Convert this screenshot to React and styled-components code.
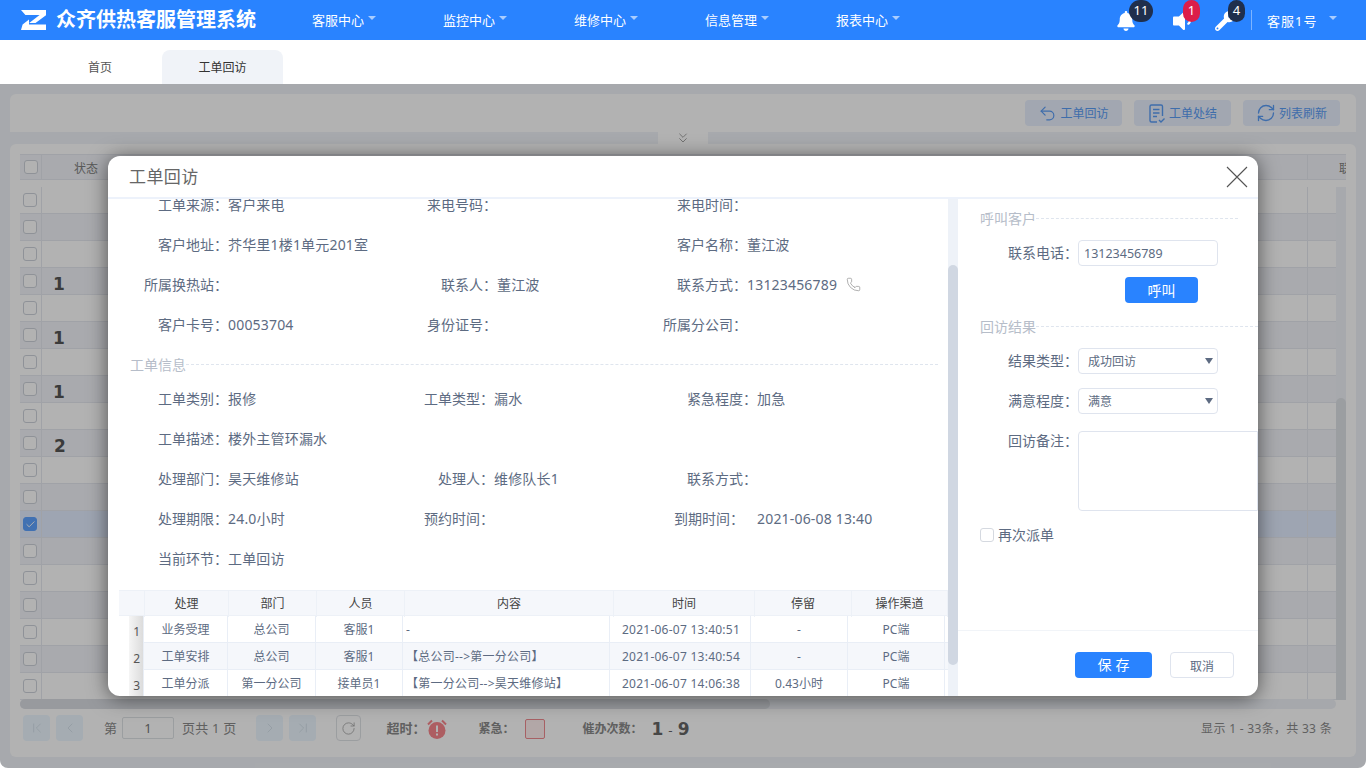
import React from 'react';
import styled, { createGlobalStyle } from 'styled-components';
import { Undo2, RefreshCw, RotateCw, ChevronsDown, ChevronFirst, ChevronLast, ChevronLeft, ChevronRight, Phone, Check } from 'lucide-react';
import { FaBell, FaVolumeDown, FaWrench } from 'react-icons/fa';

const Global = createGlobalStyle`
  html, body { margin: 0; padding: 0; background: #fff; }
  body { width: 1366px; height: 768px; overflow: hidden; font-family: "Noto Sans", "Noto Sans CJK SC", sans-serif; }
  * { box-sizing: border-box; }
`;

const Page = styled.div`width: 1366px; height: 768px; display: flex; flex-direction: column; overflow: hidden;`;
const Header = styled.header`height: 40px; background: #2983ff; display: flex; align-items: center; color: #fff; flex: none;`;
const Logo = styled.svg`width: 25px; height: 20px; margin-left: 21px; flex: none;`;
const Brand = styled.div`width: 256px; margin-left: 10px; font-size: 20px; font-weight: 700; line-height: 40px; white-space: nowrap;`;
const Nav = styled.nav`display: flex; flex: 1;`;
const NavItem = styled.div`width: 131px; font-size: 13px; line-height: 40px; display: flex; align-items: center;`;
const Caret = styled.i`
  display: block; width: 0; height: 0; margin: -5px 0 0 4px;
  border-left: 4.5px solid transparent; border-right: 4.5px solid transparent; border-top: 4.5px solid #a9cdff;
`;
const Alerts = styled.div`display: flex; align-items: center; height: 40px; margin-right: 29px;`;
const AlertIcon = styled.div`position: relative; width: ${p => p.$w}px; height: 40px; display: flex; align-items: center; padding-top: 2px; font-size: ${p => p.$size}px;`;
const Badge = styled.span`
  position: absolute; top: 0; left: ${p => p.$left}px; width: ${p => p.$w}px; height: 22px; border-radius: 11px;
  background: ${p => p.$bg}; color: #fff; font-size: 13px; line-height: 21px; text-align: center;
`;
const VDivider = styled.span`width: 1px; height: 20px; background: #ffffff66; margin-right: 15px;`;
const User = styled.div`font-size: 13px; letter-spacing: 1px; width: 58px; white-space: nowrap;`;

const Tabs = styled.div`height: 44px; background: #fff; padding: 10px 0 0 40px; display: flex; gap: 2px; flex: none;`;
const Tab = styled.div`
  width: ${p => p.$active ? 121 : 120}px; height: 34px; line-height: 35px; font-size: 12px; text-align: center; border-radius: 8px 8px 0 0;
  background: ${p => p.$active ? '#f0f3f8' : '#fff'}; color: ${p => p.$active ? '#333' : '#555'};
`;

const Main = styled.main`
  position: relative; flex: 1; height: 684px; background: #f0f3f8; padding: 10px 10px 11px; display: flex; flex-direction: column;
  border-radius: 0 0 8px 8px; overflow: hidden;
`;
const TopPanel = styled.div`height: 38px; background: #fff; border-radius: 6px 6px 0 0; display: flex; justify-content: flex-end; align-items: flex-start; gap: 12px; padding: 6px 16px 0 0; flex: none;`;
const ActionBtn = styled.div`
  width: 97px; height: 26px; border-radius: 4px; background: #e8f0fe; color: #5a9cf5; font-size: 12px;
  display: flex; align-items: center; justify-content: center; gap: 3px; white-space: nowrap;
`;
const Toggle = styled.div`width: 50px; height: 12px; background: #fff; align-self: center; display: flex; align-items: center; justify-content: center; color: #8b8b8b; flex: none;`;
const GridPanel = styled.section`flex: 1; background: #fff; border-radius: 6px; padding: 10px 10px 0; display: flex; flex-direction: column; min-height: 0;`;
const GridHead = styled.div`height: 26px; display: flex; background: #f2f4f9; border: 1px solid #e6e9f0; border-width: 1px 0; color: #808080; font-size: 12px; flex: none; overflow: hidden; position: relative;`;
const HeadCheckCell = styled.div`width: 22px; display: flex; align-items: center; justify-content: center; border-right: 1px solid #e6e9f0; flex: none;`;
const HeadStatus = styled.div`width: 1266px; padding-left: 32px; line-height: 27px; flex: none; border-right: 1px solid #e6e9f0;`;
const HeadLast = styled.div`flex: 1; padding-left: 31px; line-height: 27px; white-space: nowrap;`;
const GridBody = styled.div`height: 513px; margin-top: 7px; display: flex; flex: none; overflow: hidden;`;
const Rows = styled.div`width: 1316px; flex: none;`;
const Row = styled.div`
  height: 27px; display: flex; border-bottom: 1px solid #e6e9f0;
  background: ${p => p.$selected ? '#e2edff' : p.$even ? '#f2f4f9' : '#fff'};
`;
const CheckCell = styled.div`width: 22px; display: flex; align-items: center; justify-content: flex-start; padding-left: 3px; border-right: 1px solid #e6e9f0; flex: none;`;
const Check0 = styled.span`
  display: flex; align-items: center; justify-content: center; width: 14px; height: 14px; border-radius: 3px;
  border: 1px solid ${p => p.$on ? '#5ea3ff' : '#cdd2da'}; background: ${p => p.$on ? '#5ea3ff' : '#fff'}; color: #fff; flex: none;
`;
const Urge = styled.div`
  width: 1266px; padding: 3px 0 0 ${p => p.$two ? 12 : 11}px; border-right: 1px solid #e6e9f0; flex: none;
  font: 700 17px/26px "DejaVu Sans", sans-serif; color: #555; overflow: hidden;
`;
const VTrack = styled.div`flex: 1; background: #f0f3f8; display: flex; align-items: flex-end;`;
const VThumb = styled.div`width: 100%; height: 302px; background: #dfe2e7; border-radius: 5px 5px 0 0;`;
const HTrack = styled.div`height: 10px; width: 1316px; margin-top: -1px; background: #eef1f6; border-radius: 5px; flex: none;`;
const HThumb = styled.div`width: 750px; height: 10px; background: #dadde2; border-radius: 5px;`;

const Footer = styled.div`height: 38px; padding: 6px 14px 0 3px; display: flex; align-items: flex-start; color: #8a8a8a; font-size: 13px; flex: none;`;
const PageBtn = styled.div`width: 27px; height: 26px; border-radius: 4px; background: #ecf7ff; color: #ccd9e2; display: flex; align-items: center; justify-content: center; margin-left: ${p => p.$ml || 0}px; flex: none;`;
const RefreshBtn = styled.div`width: 25px; height: 26px; border-radius: 4px; border: 1px solid #dfe2e6; color: #999; display: flex; align-items: center; justify-content: center; margin-left: ${p => p.$ml}px; flex: none;`;
const Txt = styled.span`line-height: 26px; margin-left: ${p => p.$ml || 0}px; white-space: nowrap; flex: none; letter-spacing: ${p => p.$ls || 0}px;`;
const PageInput = styled.div`width: 52px; height: 22px; margin: 2px 0 0 5px; border: 1px solid #dfe2e6; border-radius: 2px; text-align: center; line-height: 20px; color: #777; background: #fff; flex: none;`;
const Legend = styled.span`line-height: 27px; margin-left: ${p => p.$ml}px; font-size: ${p => p.$fs}px; font-weight: 700; color: #8a8a8a; white-space: nowrap; flex: none;`;
const Alarm = styled.svg`width: 20px; height: 20px; margin: 4px 0 0 ${p => p.$ml}px; flex: none;`;
const RedBox = styled.span`width: 20px; height: 20px; margin: 4px 0 0 ${p => p.$ml}px; border: 1px solid #f08a90; border-radius: 2px; background: #fff0f0; flex: none;`;
const Count = styled.span`margin-left: ${p => p.$ml}px; font: 700 17px/28px "DejaVu Sans", sans-serif; color: #666; white-space: nowrap; flex: none;`;
const Sep = styled.span`font-weight: 400; font-size: 12px; margin: 0 5px;`;
const Summary = styled.span`margin-left: auto; line-height: 28px; color: #8a8a8a; font-size: 12px; letter-spacing: 0.3px; white-space: nowrap;`;

const Overlay = styled.div`position: absolute; inset: 0; background: rgba(0,0,0,.3);`;
const Modal = styled.div`
  position: absolute; left: 108px; top: 72px; width: 1150px; height: 540px; background: #fff; border-radius: 12px;
  box-shadow: 0 2px 20px rgba(0,0,0,.55); display: flex; flex-direction: column; overflow: hidden;
`;
const ModalHead = styled.div`height: 43px; border-bottom: 2px solid #edf2fb; padding: 0 10px 2px 21px; display: flex; align-items: center; justify-content: space-between; flex: none;`;
const ModalTitle = styled.div`font-size: 17px; color: #666; letter-spacing: 0.4px;`;
const Close = styled.svg`width: 22px; height: 22px; display: block; margin-top: 2px;`;
const ModalBody = styled.div`flex: 1; display: flex; min-height: 0;`;
const LeftPane = styled.div`width: 840px; overflow: hidden; flex: none;`;
const LeftInner = styled.div`margin-top: -15px;`;
const InfoRow = styled.div`height: 40px; padding-left: 20px; display: grid; grid-template-columns: 292px 240px 1fr; align-items: center; font-size: 14px; color: #5d6b82;`;
const Field = styled.div`display: flex; align-items: center; white-space: nowrap;`;
const FieldLabel = styled.span`width: ${p => p.$w}px; text-align: right; flex: none;`;
const FieldValue = styled.span`margin-left: ${p => p.$ml || 0}px; display: flex; align-items: center; letter-spacing: 0.18px;`;
const PhoneIcon = styled(Phone)`margin-left: 9px; color: #808080;`;
const SectionTitle = styled.div`
  display: flex; align-items: center; color: #b6bdc9; font-size: 14px; white-space: nowrap;
  height: ${p => p.$h}px; padding-top: ${p => p.$pt || 0}px; margin: ${p => p.$m};
  &::after { content: ''; flex: 1; border-top: 1px dashed #dfe5ee; }
`;
const DetailTable = styled.div`margin: 12px 0 0 11px; width: 829px; font-size: 12px; color: #5d6b82;`;
const THead = styled.div`display: grid; grid-template-columns: 26px 84px 88px 88px 209px 141px 97px 96px; height: 26px; background: #f5f7fb; color: #444; border: 1px solid #edf1f7; border-width: 1px 0;`;
const TH = styled.div`line-height: 26px; text-align: center; border-right: 1px solid #edf1f7;`;
const TRow = styled.div`display: grid; grid-template-columns: 25px 84px 88px 87px 207px 141px 97px 97px; height: 27px; background: ${p => p.$alt ? '#f5f7fb' : '#fff'}; border-bottom: 1px solid #e9eef6;`;
const TIdx = styled.div`background: linear-gradient(90deg, #fff 0 10px, #f5f5f5 10px, #dcdcdc 24px); border-right: 1px solid #e9eef6; font-size: 12px; line-height: 27px; padding: 2px 3px 0 0; text-align: right; color: #555;`;
const TD = styled.div`line-height: 28px; text-align: ${p => p.$left ? 'left' : 'center'}; padding-left: ${p => p.$left ? 3 : p.$wide ? 2 : 0}px; letter-spacing: ${p => p.$wide ? 0.25 : 0}px; border-right: 1px solid #e9eef6; white-space: nowrap; overflow: hidden;`;
const ScrollTrack = styled.div`width: 10px; background: #eef2f8; flex: none; padding-top: 66px;`;
const ScrollThumb = styled.div`height: 400px; background: #d0d7e2; border-radius: 5px;`;
const RightPane = styled.div`flex: 1; display: flex; flex-direction: column; min-width: 0;`;
const Form = styled.div`flex: 1; padding: 5px 0 0 22px;`;
const FormRow = styled.div`display: flex; margin-top: ${p => p.$mt}px; align-items: ${p => p.$top ? 'flex-start' : 'center'};`;
const FormLabel = styled.label`width: 98px; text-align: right; font-size: 14px; line-height: 20px; color: #5d6b82; flex: none;`;
const TextInput = styled.input`
  width: 140px; height: 26px; border: 1px solid #dfe4ee; border-radius: 4px; padding: 0 5px; font: 12.5px "Noto Sans", sans-serif; color: #5d6b82; outline: none; background: #fff;
`;
const CallBtn = styled.button`
  display: block; width: 73px; height: 26px; margin: 11px 0 0 145px; border: 0; border-radius: 4px; background: #2983ff; color: #fff; font: 14px "Noto Sans CJK SC", sans-serif; padding: 0;
`;
const SelectBox = styled.div`
  width: 140px; height: 26px; border: 1px solid #dfe4ee; border-radius: 4px; padding: 0 4px 0 9px; display: flex; align-items: center; justify-content: space-between; font-size: 12px; color: #5d6b82;
  &::after { content: ''; width: 0; height: 0; border-left: 4px solid transparent; border-right: 4px solid transparent; border-top: 6px solid #5d6b82; margin-top: -1px; }
`;
const Note = styled.textarea`width: 180px; height: 80px; border: 1px solid #dfe4ee; border-radius: 4px 0 0 4px; resize: none; outline: none; padding: 4px; background: #fff; display: block;`;
const CheckRow = styled.div`display: flex; align-items: center; gap: 4px; margin-top: 14px; font-size: 14px; line-height: 20px; color: #5d6b82;`;
const Box = styled.span`width: 14px; height: 14px; border: 1px solid #d5d9e0; border-radius: 3px; background: #fff;`;
const FormFoot = styled.div`height: 66px; border-top: 1px solid #f1f4f8; padding: 21px 24px 0 117px; display: flex; gap: 18px; flex: none;`;
const SaveBtn = styled.button`width: 77px; height: 26px; border: 0; border-radius: 4px; background: #2983ff; color: #fff; font: 14px/24px "Noto Sans CJK SC", sans-serif; letter-spacing: 4px; padding: 0 0 2px 4px;`;
const CancelBtn = styled.button`width: 64px; height: 26px; border: 1px solid #dfe4ee; border-radius: 4px; background: #fff; color: #5d6b82; font: 12px "Noto Sans CJK SC", sans-serif; padding: 0;`;

const navs = ['客服中心', '监控中心', '维修中心', '信息管理', '报表中心'];
const urgeByRow = { 4: '1', 6: '1', 8: '1', 10: '2' };
const detail = [
  ['业务受理', '总公司', '客服1', '-', '2021-06-07 13:40:51', '-', 'PC端'],
  ['工单安排', '总公司', '客服1', '【总公司-->第一分公司】', '2021-06-07 13:40:54', '-', 'PC端'],
  ['工单分派', '第一分公司', '接单员1', '【第一分公司-->昊天维修站】', '2021-06-07 14:06:38', '0.43小时', 'PC端'],
];
const cols1 = [100, 77, 87];
const cols2 = [100, 74, 97];
const info1 = [
  [['工单来源：', '客户来电'], ['来电号码：', ''], ['来电时间：', '']],
  [['客户地址：', '芥华里1楼1单元201室'], null, ['客户名称：', '董江波']],
  [['所属换热站：', ''], ['联系人：', '董江波'], ['联系方式：', '13123456789', true]],
  [['客户卡号：', '00053704'], ['身份证号：', ''], ['所属分公司：', '']],
];
const info2 = [
  [['工单类别：', '报修'], ['工单类型：', '漏水'], ['紧急程度：', '加急']],
  [['工单描述：', '楼外主管环漏水'], null, null],
  [['处理部门：', '昊天维修站'], ['处理人：', '维修队长1'], ['联系方式：', '']],
  [['处理期限：', '24.0小时'], ['预约时间：', ''], ['到期时间：', '2021-06-08 13:40', false, 84, 13]],
  [['当前环节：', '工单回访'], null, null],
];

function InfoRows({ rows, widths }) {
  return rows.map((r, i) => (
    <InfoRow key={i}>
      {r.map((f, j) => f ? (
        <Field key={j}>
          <FieldLabel $w={f[3] || widths[j]}>{f[0]}</FieldLabel>
          <FieldValue $ml={f[4]}>{f[1]}{f[2] && <PhoneIcon size={15} strokeWidth={1} />}</FieldValue>
        </Field>
      ) : <span key={j} />)}
    </InfoRow>
  ));
}

export default function App() {
  return (
    <Page>
      <Global />
      <Header>
        <Logo viewBox="0 0 25 20">
          <path fill="#fff" d="M0 0H25V5.2L14.5 13H8.2L18.6 5H4.4Z" />
          <path fill="#fff" d="M0 20L1.6 14.6L8 9.6V14.6H25V20Z" />
        </Logo>
        <Brand>众齐供热客服管理系统</Brand>
        <Nav>
          {navs.map(n => <NavItem key={n}>{n}<Caret /></NavItem>)}
        </Nav>
        <Alerts>
          <AlertIcon $w={54} $size={20}><FaBell /><Badge $left={13} $w={24} $bg="#1f2f4d">11</Badge></AlertIcon>
          <AlertIcon $w={45} $size={24}><FaVolumeDown /><Badge $left={13} $w={17} $bg="#dc1e4a">1</Badge></AlertIcon>
          <AlertIcon $w={36} $size={20}><FaWrench /><Badge $left={13} $w={17} $bg="#1f2f4d">4</Badge></AlertIcon>
          <VDivider />
          <User>客服1号</User>
          <Caret />
        </Alerts>
      </Header>
      <Tabs>
        <Tab>首页</Tab>
        <Tab $active>工单回访</Tab>
      </Tabs>
      <Main>
        <TopPanel>
          <ActionBtn><Undo2 size={19} strokeWidth={1.5} />工单回访</ActionBtn>
          <ActionBtn>
            <svg width="18" height="21" viewBox="0 0 18 21" fill="none" stroke="currentColor" strokeWidth="1.4">
              <path d="M9 19H3.5A1.5 1.5 0 0 1 2 17.5V3.5A1.5 1.5 0 0 1 3.5 2H13A1.5 1.5 0 0 1 14.5 3.5V13" />
              <path d="M5 6.5H11.5M5 10H11.5M5 13.5H9M11 17L13 19L16.5 15.5" />
            </svg>
            工单处结
          </ActionBtn>
          <ActionBtn><RefreshCw size={20} strokeWidth={1.6} />列表刷新</ActionBtn>
        </TopPanel>
        <Toggle><ChevronsDown size={16} strokeWidth={1.2} /></Toggle>
        <GridPanel>
          <GridHead>
            <HeadCheckCell><Check0 /></HeadCheckCell>
            <HeadStatus>状态</HeadStatus>
            <HeadLast>联系电话</HeadLast>
          </GridHead>
          <GridBody>
            <Rows>
              {Array.from({ length: 19 }, (_, i) => i + 1).map(n => (
                <Row key={n} $even={n % 2 === 0} $selected={n === 13}>
                  <CheckCell>
                    <Check0 $on={n === 13}>{n === 13 && <Check size={11} strokeWidth={2} />}</Check0>
                  </CheckCell>
                  <Urge $two={urgeByRow[n] === '2'}>{urgeByRow[n]}</Urge>
                </Row>
              ))}
            </Rows>
            <VTrack><VThumb /></VTrack>
          </GridBody>
          <HTrack><HThumb /></HTrack>
          <Footer>
            <PageBtn><ChevronFirst size={16} strokeWidth={1} /></PageBtn>
            <PageBtn $ml={6}><ChevronLeft size={16} strokeWidth={1} /></PageBtn>
            <Txt $ml={21}>第</Txt>
            <PageInput>1</PageInput>
            <Txt $ml={8} $ls={0.2}>页共 1 页</Txt>
            <PageBtn $ml={20}><ChevronRight size={16} strokeWidth={1} /></PageBtn>
            <PageBtn $ml={6}><ChevronLast size={16} strokeWidth={1} /></PageBtn>
            <RefreshBtn $ml={20}><RotateCw size={15} strokeWidth={1.2} /></RefreshBtn>
            <Legend $ml={25} $fs={13}>超时：</Legend>
            <Alarm $ml={2} viewBox="0 0 20 20">
              <circle cx="10" cy="11.5" r="8.5" fill="#f8878d" />
              <path d="M1 5.5L5 1.5M19 5.5L15 1.5" stroke="#f8878d" strokeWidth="2" />
              <rect x="9" y="6.5" width="2" height="6.5" fill="#fff" />
              <rect x="9" y="14.5" width="2" height="2" fill="#fff" />
            </Alarm>
            <Legend $ml={31} $fs={12}>紧急：</Legend>
            <RedBox $ml={11} />
            <Legend $ml={37} $fs={12}>催办次数：</Legend>
            <Count $ml={9}>1<Sep>-</Sep>9</Count>
            <Summary>显示 1 - 33条，共 33 条</Summary>
          </Footer>
        </GridPanel>
        <Overlay />
        <Modal>
          <ModalHead>
            <ModalTitle>工单回访</ModalTitle>
            <Close viewBox="0 0 22 22" stroke="#555" strokeWidth="1.1"><path d="M1 1L21 21M21 1L1 21" /></Close>
          </ModalHead>
          <ModalBody>
            <LeftPane>
              <LeftInner>
                <InfoRows rows={info1} widths={cols1} />
                <SectionTitle $h={34} $pt={6} $m="0 10px 0 22px">工单信息</SectionTitle>
                <InfoRows rows={info2} widths={cols2} />
                <DetailTable>
                  <THead>
                    {['', '处理', '部门', '人员', '内容', '时间', '停留', '操作渠道'].map(h => <TH key={h}>{h}</TH>)}
                  </THead>
                  {detail.map((r, i) => (
                    <TRow key={i} $alt={i === 1}>
                      <TIdx>{i + 1}</TIdx>
                      {r.map((c, j) => <TD key={j} $left={j === 3} $wide={j === 3 || j === 4}>{c}</TD>)}
                    </TRow>
                  ))}
                </DetailTable>
              </LeftInner>
            </LeftPane>
            <ScrollTrack><ScrollThumb /></ScrollTrack>
            <RightPane>
              <Form>
                <SectionTitle $h={28} $m="0 20px 0 0">呼叫客户</SectionTitle>
                <FormRow $mt={8}>
                  <FormLabel>联系电话：</FormLabel>
                  <TextInput readOnly value="13123456789" />
                </FormRow>
                <CallBtn>呼叫</CallBtn>
                <SectionTitle $h={28} $m="9px 0 0 0">回访结果</SectionTitle>
                <FormRow $mt={8}>
                  <FormLabel>结果类型：</FormLabel>
                  <SelectBox>成功回访</SelectBox>
                </FormRow>
                <FormRow $mt={14}>
                  <FormLabel>满意程度：</FormLabel>
                  <SelectBox>满意</SelectBox>
                </FormRow>
                <FormRow $mt={17} $top>
                  <FormLabel>回访备注：</FormLabel>
                  <Note />
                </FormRow>
                <CheckRow><Box />再次派单</CheckRow>
              </Form>
              <FormFoot>
                <SaveBtn>保存</SaveBtn>
                <CancelBtn>取消</CancelBtn>
              </FormFoot>
            </RightPane>
          </ModalBody>
        </Modal>
      </Main>
    </Page>
  );
}
